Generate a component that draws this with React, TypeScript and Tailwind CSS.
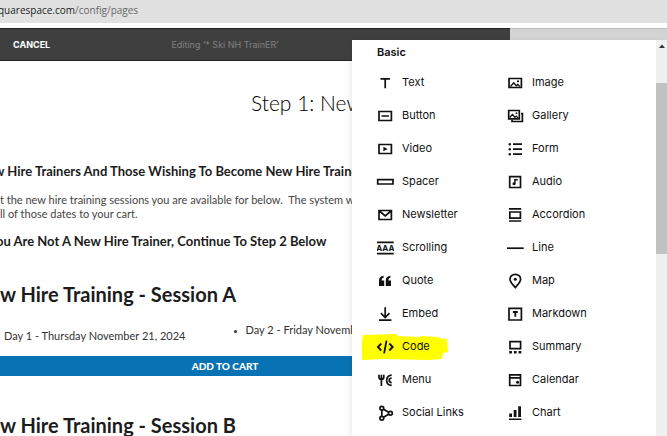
import React from "react";

type Block = { name: string; icon: React.ReactNode; marked?: boolean };

const solid = { fill: "currentColor", stroke: "none" };

const blocks: Block[] = [
  { name: "Text", icon: <path d="M5.5 5.8h9.4M10.2 5.8V15.2" /> },
  {
    name: "Image",
    icon: (
      <>
        <path d="M4 5.5h12.4v9H4z" />
        <path d="M5.5 13.5l3.2-3.7 2.6 3 1.5-1.4 2 2.1" strokeWidth="1.3" />
        <circle cx="13" cy="8.3" r="1.1" {...solid} />
      </>
    ),
  },
  { name: "Button", icon: <path d="M4 5.5h12.4v9H4zM6.5 10h7.4" /> },
  {
    name: "Gallery",
    icon: (
      <>
        <path d="M3.7 4.5h10.6v8.3H3.7z" />
        <path d="M16 7.6h1.4v7.9H7v-1.8" />
        <path d="M4.5 11.5l3-3 2.4 2.8 1.3-1.2 2 2" strokeWidth="1.3" />
        <circle cx="11.5" cy="7.2" r="0.9" {...solid} />
      </>
    ),
  },
  {
    name: "Video",
    icon: (
      <>
        <path d="M4 5.5h12.4v9H4z" />
        <path d="M8.4 7.7l4.2 2.3-4.2 2.3z" {...solid} />
      </>
    ),
  },
  {
    name: "Form",
    icon: (
      <>
        <path d="M8 5.2h9M8 10.2h9M8 15.2h9" />
        <g {...solid}>
          <circle cx="4.8" cy="5.2" r="1.2" />
          <circle cx="4.8" cy="10.2" r="1.2" />
          <circle cx="4.8" cy="15.2" r="1.2" />
        </g>
      </>
    ),
  },
  { name: "Spacer", icon: <path d="M2.7 7.7h15.3v4.3H2.7z" /> },
  {
    name: "Audio",
    icon: (
      <>
        <path d="M4.7 4.7h10.8v10.8H4.7z" />
        <path d="M9.2 6.9h3.6v1.6h-2.1v3.2a1.6 1.5 0 1 1-1.5-1.5z" {...solid} />
      </>
    ),
  },
  { name: "Newsletter", icon: <path d="M4 5.5h12.4v9H4zM4.4 6l5.8 5 5.8-5" /> },
  {
    name: "Accordion",
    icon: <path d="M4 3.8h12.2M4 16h12.2M4.8 7h10.6v6.2H4.8z" />,
  },
  {
    name: "Scrolling",
    icon: (
      <>
        <path d="M2 4.4h16.7M2 15.6h16.7" />
        <svg x="2" y="5" width="17" height="10" viewBox="2 5 17 10">
          <text
            x="10.3"
            y="13"
            textAnchor="middle"
            className="fill-current stroke-none font-['Inter',sans-serif] text-[8px] font-bold"
          >
            AAA
          </text>
        </svg>
      </>
    ),
  },
  { name: "Line", icon: <path d="M2 10.2h16.7" /> },
  {
    name: "Quote",
    icon: (
      <g {...solid}>
        <path d="M4 15V9.5C4 6.8 5.7 5 8.6 4.8v2C7.3 7 6.6 8 6.6 9.4h2.6V15z" />
        <path d="M10.8 15V9.5c0-2.7 1.7-4.5 4.6-4.7v2c-1.3.2-2 1.2-2 2.6H16V15z" />
      </g>
    ),
  },
  {
    name: "Map",
    icon: (
      <>
        <path d="M10.3 16.6C8 13.6 5 11.2 5 8.2a5.3 4.9 0 0 1 10.6 0c0 3-3 5.4-5.3 8.4z" />
        <circle cx="10.3" cy="8.2" r="1.5" {...solid} />
      </>
    ),
  },
  {
    name: "Embed",
    icon: <path d="M10.2 3.3v10M5.9 9.2l4.3 4.3 4.3-4.3M4 16.2h12.4" />,
  },
  {
    name: "Markdown",
    icon: (
      <>
        <path d="M4 4.4h12.4v11.6H4z" />
        <path d="M7.9 8h4.8M10.3 8v4.8" strokeWidth="1.8" />
      </>
    ),
  },
  {
    name: "Code",
    marked: true,
    icon: (
      <path d="M6.3 6.5L2.9 10l3.4 3.5M14.3 6.5l3.4 3.5-3.4 3.5M11.5 3.7L9.1 16.3" strokeWidth="1.8" />
    ),
  },
  {
    name: "Summary",
    icon: (
      <>
        <path d="M5 4.7h10.6v7H5z" />
        <path d="M4.2 14h2.7v2.6H4.2zM8.9 14h2.7v2.6H8.9zM13.6 14h2.7v2.6h-2.7z" {...solid} />
      </>
    ),
  },
  {
    name: "Menu",
    icon: (
      <>
        <path d="M4 4.7v2.5q0 2 2.4 2t2.4-2V4.7M6.4 4.7V16" />
        <path d="M16.7 5.2c-3.2 0-5 2.2-5 5.1s1.8 5.1 5 5.1M16.7 8c-1.6 0-2.5 1-2.5 2.3s.9 2.3 2.5 2.3" />
      </>
    ),
  },
  {
    name: "Calendar",
    icon: (
      <>
        <path d="M4.7 4.9h10.8v10.6H4.7zM4.7 7.9h10.8" />
        <circle cx="12.6" cy="12.3" r="1.5" {...solid} />
      </>
    ),
  },
  {
    name: "Social Links",
    icon: (
      <>
        <circle cx="6.8" cy="5.2" r="1.9" />
        <circle cx="15.4" cy="10.2" r="1.9" />
        <circle cx="6.8" cy="15.2" r="1.9" />
        <path d="M6.8 7.1v6.2M8.5 6.2l5.2 3M8.5 14.2l5.2-3" />
      </>
    ),
  },
  {
    name: "Chart",
    icon: (
      <path
        d="M4.2 10.6H7V14H4.2zM8.7 7h2.8v7H8.7zM13.2 3.3H16V14h-2.8zM4 15.4h12.4v1.5H4z"
        {...solid}
      />
    ),
  },
];

function BlockButton({ block }: { block: Block }) {
  return (
    <button type="button" className="relative flex h-[33px] items-center gap-[7px] text-left">
      {block.marked && (
        <svg
          aria-hidden="true"
          className="absolute -left-[13px] top-1 h-[28px] w-[88px] text-[#ffff00]"
          viewBox="0 0 88 28"
          fill="currentColor"
        >
          <path d="M1 1L34 0l2 2 22 1 1-1 17 1 1 1 8 1 1 13-5 1-1 6-13 1-45-1-22 1-2-1-1-12 2-1z" />
        </svg>
      )}
      <svg
        aria-hidden="true"
        className="relative size-5 shrink-0"
        viewBox="0 0 20 20"
        fill="none"
        stroke="currentColor"
        strokeWidth="1.7"
      >
        {block.icon}
      </svg>
      <span className="relative">{block.name}</span>
    </button>
  );
}

function BlockPanel() {
  return (
    <aside className="absolute right-0 bottom-0 top-10 flex w-[315px] bg-white font-['Inter',sans-serif] text-[11px] text-[#111] shadow-[0_4px_8px_rgba(0,0,0,0.12)]">
      <div className="min-w-0 flex-1 overflow-hidden pl-[23px]">
        <h2 className="mb-[2px] flex h-6 items-center pl-[2px] font-semibold">Basic</h2>
        <div className="grid grid-cols-[130px_1fr]">
          {blocks.map((block) => (
            <BlockButton key={block.name} block={block} />
          ))}
        </div>
      </div>
      <div className="flex w-[11px] flex-col items-center bg-[#f0f0f0]">
        <svg aria-hidden="true" className="h-[43px] w-[11px] text-[#333]" viewBox="0 0 11 43" fill="currentColor">
          <path d="M3 8l3-3.5L9 8z" />
        </svg>
        <div className="h-[171px] w-full bg-[#c1c1c1]" />
      </div>
    </aside>
  );
}

function Session({ name, children }: { name: string; children?: React.ReactNode }) {
  return (
    <section>
      <h2 className="text-[20px] leading-6 font-bold text-[#1c1c1c]">w Hire Training - Session {name}</h2>
      {children}
    </section>
  );
}

export default function App() {
  return (
    <div className="relative flex h-screen flex-col overflow-hidden whitespace-nowrap bg-white font-['Lato',sans-serif]">
      <div className="h-[23px] shrink-0 bg-[#e1e1e1] font-['Open_Sans',sans-serif] text-[10px] leading-[21px] text-[#666]">
        <div className="-ml-[2px]">
          <span className="text-[#222]">quarespace.com</span>/config/pages
        </div>
      </div>
      <div className="mt-[5px] flex h-[33px] shrink-0">
        <header className="grid flex-1 grid-cols-[1fr_auto_1fr] items-center border-y border-[#222] bg-[#3f3f3f] pr-[60px] font-['Inter',sans-serif] text-[9px]">
          <button type="button" className="justify-self-start pl-[13px] font-bold text-white">
            CANCEL
          </button>
          <span className="text-[#808080]">Editing ‘* Ski NH TrainER’</span>
        </header>
        <div className="w-[157px] border-t border-[#bbb] bg-[#d3d3d3]" />
      </div>
      <main className="flex w-full flex-col pt-[30px] pr-[157px]">
        <h1 className="pl-[251px] text-[21px] leading-6 font-light text-black">Step 1: New</h1>
        <div className="-ml-[6px] pt-[46px] text-[#1c1c1c]">
          <h3 className="text-[13px] leading-5 font-bold">w Hire Trainers And Those Wishing To Become New Hire Trainers</h3>
          <p className="pt-[12px] pl-[6px] text-[11px] leading-[14px] text-[#444]">
            t the new hire training sessions you are available for below.&nbsp; The system will
            <br />
            ll of those dates to your cart.
          </p>
          <h3 className="pt-[10px] pl-[2px] text-[13px] leading-5 font-bold">
            ou Are Not A New Hire Trainer, Continue To Step 2 Below
          </h3>
        </div>
        <div className="flex flex-col gap-[37px] pt-[31px]">
          <Session name="A">
            <div className="flex items-start gap-[60px] pt-[16px] pl-[4px] text-[11px] leading-4 text-[#333]">
              <p className="pt-[6px]">Day 1 - Thursday November 21, 2024</p>
              <ul className="list-disc marker:text-[8px]">
                <li>Day 2 - Friday November 22, 2024</li>
              </ul>
            </div>
            <button
              type="button"
              className="mt-[12px] block h-5 w-full bg-[#0873b4] pr-[60px] text-[10px] font-black text-white"
            >
              ADD TO CART
            </button>
          </Session>
          <Session name="B" />
        </div>
      </main>
      <BlockPanel />
    </div>
  );
}
